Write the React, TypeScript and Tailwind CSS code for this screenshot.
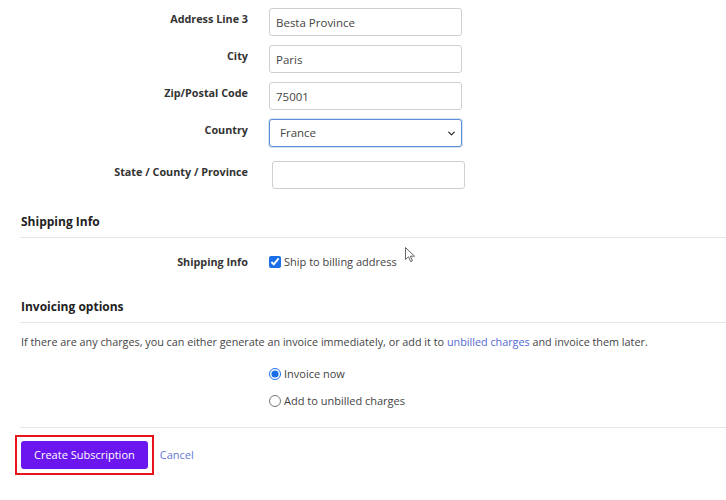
import { ChevronDown } from 'lucide-react'

const font = { fontFamily: '"Open Sans", "Noto Sans", sans-serif' }

function Row({ label, children, top = 'pt-[4px]' }: { label: string; children: React.ReactNode; top?: string }) {
  return (
    <div className="flex items-start">
      <label className={`w-[228px] shrink-0 text-right text-[10.8px] font-bold leading-[14px] text-[#333] ${top}`}>
        {label}
      </label>
      <div className="ml-[21px]">{children}</div>
    </div>
  )
}

function TextInput({ value }: { value?: string }) {
  return (
    <input
      readOnly
      value={value ?? ''}
      className="h-[28px] w-[193px] rounded-[3px] border border-[#cfcfcf] bg-white px-[6px] text-[11.5px] text-[#444] outline-none"
    />
  )
}

function Cursor() {
  return (
    <svg className="absolute left-[405px] top-[247px]" width="11" height="16" viewBox="0 0 11 16">
      <path d="M0.5 0.5 L0.5 12.5 L3.5 9.8 L5.6 14.6 L7.4 13.8 L5.4 9.2 L9.5 9.2 Z" fill="#fff" stroke="#555" strokeWidth="0.9" strokeLinejoin="round" />
    </svg>
  )
}

export default function App() {
  return (
    <div className="relative h-[500px] w-[726px] overflow-hidden bg-white text-[#333]" style={font}>
      <Cursor />
      <div className="-mt-[29px] pl-[20px]">
        <div className="flex flex-col gap-[9px]">
          {/* previous row, scrolled mostly out of view */}
          <Row label="">
            <TextInput value="" />
          </Row>
          <Row label="Address Line 3">
            <TextInput value="Besta Province" />
          </Row>
          <Row label="City">
            <TextInput value="Paris" />
          </Row>
          <Row label="Zip/Postal Code">
            <TextInput value="75001" />
          </Row>
          <Row label="Country">
            <div className="relative flex h-[28px] w-[193px] items-center rounded-[3px] border border-[#5c8fd6] bg-white pl-[10px] text-[11.5px] text-[#444] shadow-[0_0_0_1px_rgba(92,143,214,0.25)]">
              France
              <ChevronDown className="absolute right-[4px] top-[8px] h-[11px] w-[11px] text-[#333]" strokeWidth={3} />
            </div>
          </Row>
        </div>
        <div className="mt-[14px]">
          <Row label="State / County / Province" top="pt-[4px]">
            <div className="ml-[3px]">
              <TextInput value="" />
            </div>
          </Row>
        </div>

        <h3 className="mt-[24px] pl-[1px] text-[12px] font-bold leading-[18px] text-[#222]">Shipping Info</h3>
        <div className="mt-[6px] h-px bg-[#e6e6e6]" />
        <div className="mt-[15px]">
          <Row label="Shipping Info" top="pt-[2px]">
            <label className="flex items-center gap-[3px] text-[11px] text-[#444]">
              <input type="checkbox" checked readOnly className="m-0 h-[12px] w-[12px] accent-[#1a6fe8]" />
              <span className="leading-[18px]">Ship to billing address</span>
            </label>
          </Row>
        </div>

        <h3 className="mt-[27px] pl-[1px] text-[12px] font-bold leading-[18px] text-[#222]">Invoicing options</h3>
        <div className="mt-[6px] h-px bg-[#e6e6e6]" />
        <p className="mt-[11px] pl-[1px] text-[10.8px] leading-[16px] text-[#444]">
          If there are any charges, you can either generate an invoice immediately, or add it to{' '}
          <a className="text-[#5468d4]">unbilled charges</a> and invoice them later.
        </p>
        <div className="ml-[249px] mt-[15px] flex flex-col gap-[9px] text-[11px] text-[#444]">
          <label className="flex items-center gap-[3px]">
            <input type="radio" name="inv" checked readOnly className="m-0 h-[12px] w-[12px] accent-[#1a6fe8]" />
            <span className="leading-[18px]">Invoice now</span>
          </label>
          <label className="flex items-center gap-[3px]">
            <input type="radio" name="inv" readOnly className="m-0 h-[12px] w-[12px]" />
            <span className="leading-[18px]">Add to unbilled charges</span>
          </label>
        </div>
        <div className="mt-[17px] h-px bg-[#e6e6e6]" />
        <div className="mt-[7px] flex items-center">
          <div className="-ml-[5px] border-2 border-[#e8141b] p-[4px]">
            <button className="h-[28px] rounded-[3px] bg-[#6b16ee] px-[13px] text-[11px] text-white">
              Create Subscription
            </button>
          </div>
          <a className="ml-[6px] text-[11px] text-[#6577d6]">Cancel</a>
        </div>
      </div>
    </div>
  )
}
